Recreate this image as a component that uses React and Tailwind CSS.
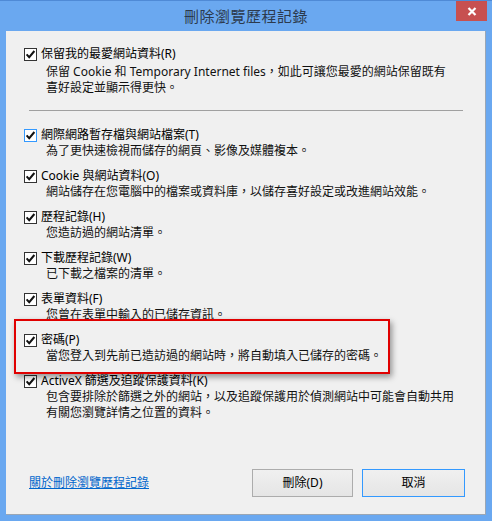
import { Fragment } from "react";

const font = { fontFamily: '"Noto Sans", "Noto Sans CJK TC", sans-serif' };

function CheckBox({ focused }) {
  return (
    <svg width="13" height="13" viewBox="0 0 13 13" className="shrink-0">
      <rect
        x="0.5"
        y="0.5"
        width="12"
        height="12"
        fill="#fff"
        stroke={focused ? "#3399ff" : "#333333"}
      />
      <path d="M2.6 6.4 L5.2 9.2 L10.4 3" fill="none" stroke="#111" strokeWidth="2" />
    </svg>
  );
}

function Item({ label, desc, focused, descClass = "mt-0" }) {
  return (
    <div className="flex flex-col">
      <div className="flex items-center gap-[4px] h-[16px]">
        <CheckBox focused={focused} />
        <span className="leading-[16px] text-black whitespace-nowrap">{label}</span>
      </div>
      <div className={`pl-[22px] leading-[16px] text-[#111] whitespace-nowrap ${descClass}`}>
        {desc.map((line, i) => (
          <Fragment key={i}>
            {i > 0 && <br />}
            {line}
          </Fragment>
        ))}
      </div>
    </div>
  );
}

const items = [
  {
    label: "網際網路暫存檔與網站檔案(T)",
    desc: ["為了更快速檢視而儲存的網頁、影像及媒體複本。"],
    focused: true,
  },
  {
    label: "Cookie 與網站資料(O)",
    desc: ["網站儲存在您電腦中的檔案或資料庫，以儲存喜好設定或改進網站效能。"],
  },
  { label: "歷程記錄(H)", desc: ["您造訪過的網站清單。"] },
  { label: "下載歷程記錄(W)", desc: ["已下載之檔案的清單。"] },
  { label: "表單資料(F)", desc: ["您曾在表單中輸入的已儲存資訊。"] },
  { label: "密碼(P)", desc: ["當您登入到先前已造訪過的網站時，將自動填入已儲存的密碼。"] },
  {
    label: "ActiveX 篩選及追蹤保護資料(K)",
    desc: [
      "包含要排除於篩選之外的網站，以及追蹤保護用於偵測網站中可能會自動共用",
      "有關您瀏覽詳情之位置的資料。",
    ],
  },
];

export default function App() {
  return (
    <div
      className="relative w-[492px] h-[521px] bg-[#6aa8f0] border-t border-[#4f8ad6] flex flex-col px-[6px] pb-[6px] text-[12px]"
      style={font}
    >
      {/* title bar */}
      <div className="h-[30px] flex items-center justify-center">
        <span className="text-[15px] text-[#2c3a4d] leading-none tracking-[0.5px]">
          刪除瀏覽歷程記錄
        </span>
      </div>
      <div className="absolute top-0 right-[5px] w-[31px] h-[20px] bg-[#c75050] flex items-center justify-center">
        <svg width="10" height="9" viewBox="0 0 10 9">
          <path d="M1.5 1 L8.5 8 M8.5 1 L1.5 8" stroke="#fff" strokeWidth="2.2" />
        </svg>
      </div>

      {/* content */}
      <div className="relative flex-1 bg-[#f0f0f0] border-r border-b border-[#9aa6b4] flex flex-col pl-[18px] pr-[20px] pt-[15px] pb-[17px]">
        <Item
          label="保留我的最愛網站資料(R)"
          desc={[
            "保留 Cookie 和 Temporary Internet files，如此可讓您最愛的網站保留既有",
            "喜好設定並顯示得更快。",
          ]}
          descClass="mt-[2px]"
        />

        <div className="ml-[5px] mt-[14px] w-[434px] border-t border-[#a0a0a0]" />

        <div className="mt-[16px] flex flex-col gap-[9px]">
          {items.map((it) => (
            <Item key={it.label} {...it} />
          ))}
        </div>

        <div className="flex-1" />

        {/* bottom row */}
        <div className="flex items-center">
          <a className="ml-[5px] text-[#0066cc] underline leading-[16px] cursor-pointer">
            關於刪除瀏覽歷程記錄
          </a>
          <div className="flex-1" />
          <button className="w-[101px] h-[28px] border border-[#acacac] bg-gradient-to-b from-[#f0f0f0] to-[#e5e5e5] text-black">
            刪除(D)
          </button>
          <button className="ml-[9px] w-[103px] h-[28px] border border-[#3399ff] bg-gradient-to-b from-[#f0f0f0] to-[#e5e5e5] text-black">
            取消
          </button>
        </div>

        {/* red highlight annotation */}
        <div className="absolute left-[8px] top-[288px] w-[376px] h-[55px] border-2 border-[#e00000] shadow-[2px_3px_6px_rgba(0,0,0,0.4)]" />
      </div>
    </div>
  );
}
